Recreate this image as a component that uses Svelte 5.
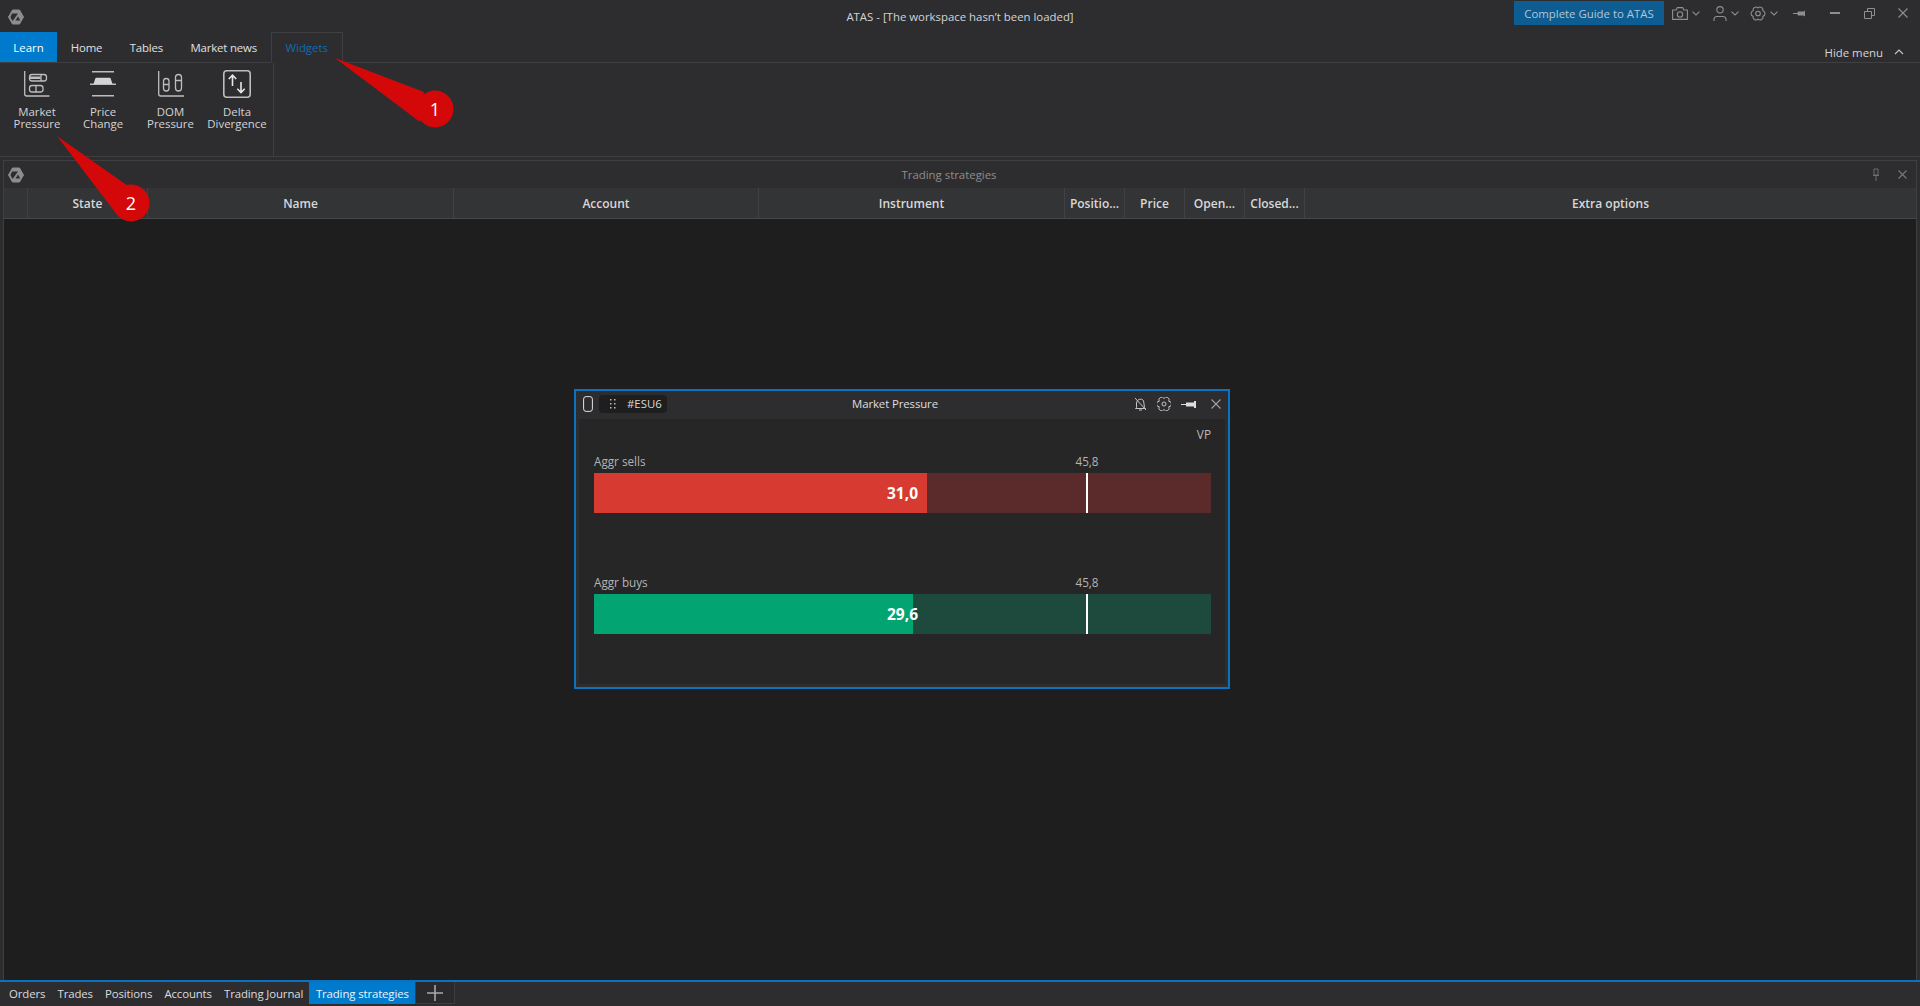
<script>
  const tabs = ['Home', 'Tables', 'Market news'];
  const columns = ['', 'State', 'Name', 'Account', 'Instrument', 'Positio...', 'Price', 'Open...', 'Closed...', 'Extra options'];
  const bottomTabs = ['Orders', 'Trades', 'Positions', 'Accounts', 'Trading Journal'];
  const meters = [
    { label: 'Aggr sells', value: '31,0', pct: 54, kind: 'sell' },
    { label: 'Aggr buys', value: '29,6', pct: 51.7, kind: 'buy' }
  ];
  const ribbon = [
    { id: 'mp', lines: ['Market', 'Pressure'] },
    { id: 'pc', lines: ['Price', 'Change'] },
    { id: 'dom', lines: ['DOM', 'Pressure'] },
    { id: 'dd', lines: ['Delta', 'Divergence'] }
  ];
</script>

{#snippet logo()}
  <svg class="logo" viewBox="0 0 16 16" width="16" height="16">
    <path d="M4.500 1h7L15.500 8l-4 7h-7L.5 8z" fill="#8d8d8d" stroke="#8d8d8d" stroke-linejoin="round"/>
    <path d="M4 4.500h6L5 11.500H4L2.500 8z" fill="#2d2d30"/>
    <path d="M10 7.500l2.300 4H7.500z" fill="#2d2d30"/>
  </svg>
{/snippet}

{#snippet chevron()}
  <svg class="chev" viewBox="0 0 8 5" width="8" height="5"><path d="M.5.7L4 4 7.500.7" fill="none" stroke="#8f8f8f" stroke-width="1.100"/></svg>
{/snippet}

<div class="app">
  <header class="titlebar">
    <div class="tb-left">{@render logo()}</div>
    <div class="tb-title">ATAS - [The workspace hasn’t been loaded]</div>
    <div class="tb-right">
      <button class="guide">Complete Guide to ATAS</button>
      <span class="ticon cam">
        <svg viewBox="0 0 16 13" width="16" height="13"><path d="M.6 3h3.600l1-2.400h5.600l1 2.400h3.600v9.400H.6z" fill="none" stroke="#8f8f8f" stroke-width="1.100" stroke-linejoin="round"/><circle cx="8" cy="7.500" r="2.700" fill="none" stroke="#8f8f8f" stroke-width="1.100"/></svg>
        {@render chevron()}
      </span>
      <span class="ticon user">
        <svg viewBox="0 0 14 15" width="14" height="15"><circle cx="7" cy="3.800" r="3.200" fill="none" stroke="#8f8f8f" stroke-width="1.100"/><path d="M1 15v-2a3 3 0 0 1 3-2.500h6a3 3 0 0 1 3 2.500v2" fill="none" stroke="#8f8f8f" stroke-width="1.100"/></svg>
        {@render chevron()}
      </span>
      <span class="ticon gear">
        <svg viewBox="0 0 16 15" width="16" height="15"><path d="M8 1.900A2.900 2.900 0 0 1 12.850 4.700 2.900 2.900 0 0 1 12.850 10.300 2.900 2.900 0 0 1 8 13.100 2.900 2.900 0 0 1 3.150 10.300 2.900 2.900 0 0 1 3.150 4.700 2.900 2.900 0 0 1 8 1.900z" fill="none" stroke="#8f8f8f" stroke-width="1.100"/><circle cx="8" cy="7.500" r="2.300" fill="none" stroke="#8f8f8f" stroke-width="1.100"/></svg>
        {@render chevron()}
      </span>
      <span class="ticon pin">
        <svg viewBox="0 0 13 7" width="13" height="7"><path d="M0 3.500h5M5 2h6v3H5zM11.500 .8v5.400" fill="#8f8f8f" stroke="#8f8f8f"/></svg>
      </span>
      <span class="ticon min"><svg viewBox="0 0 10 3" width="10" height="3"><rect width="10" height="2" fill="#8f8f8f"/></svg></span>
      <span class="ticon max"><svg viewBox="0 0 11 11" width="11" height="11"><path d="M3.500 3V.5h7v7H8M.5 3.500h7v7h-7z" fill="none" stroke="#8f8f8f"/></svg></span>
      <span class="ticon close"><svg viewBox="0 0 10 10" width="10" height="10"><path d="M.5.5l9 9M9.500.5l-9 9" stroke="#8f8f8f" stroke-width="1.100"/></svg></span>
    </div>
  </header>

  <nav class="tabs">
    <div class="tab learn">Learn</div>
    {#each tabs as t}<div class="tab">{t}</div>{/each}
    <div class="tab widgets">Widgets</div>
    <div class="hide">Hide menu
      <svg viewBox="0 0 10 6" width="10" height="6"><path d="M1 5l4-4 4 4" fill="none" stroke="#c8c8c8" stroke-width="1.100"/></svg>
    </div>
  </nav>

  <section class="ribbon">
    <div class="group">
      {#each ribbon as r}
        <div class="rb rb-{r.id}">
          <div class="ic">
            {#if r.id === 'mp'}
              <svg viewBox="0 0 26 26" width="26" height="26"><g fill="none" stroke="#bdbdbd" stroke-width="1.300"><path d="M.7 0v23a2 2 0 0 0 2 2H25.500"/><rect x="5.500" y="3.500" width="17" height="6.500" rx="2.500"/><rect x="5.500" y="14.500" width="13.500" height="6.500" rx="2.500"/><path d="M17 3.500v6.500M12 14.500v6.500"/></g><rect x="6" y="5.500" width="10.500" height="2.500" fill="#bdbdbd"/></svg>
            {:else if r.id === 'pc'}
              <svg viewBox="0 0 26 26" width="26" height="26"><path d="M2 .8h22M0 13.300h26M2 24.800h22" stroke="#bdbdbd" stroke-width="1.500"/><path d="M3.500 13l1.800-5.500a1 1 0 0 1 1-.8h13.400a1 1 0 0 1 1 .8l1.800 5.500z" fill="#d4d4d4"/></svg>
            {:else if r.id === 'dom'}
              <svg viewBox="0 0 26 26" width="26" height="26"><g fill="none" stroke="#bdbdbd" stroke-width="1.300"><path d="M.7 0v23a2 2 0 0 0 2 2H26"/><rect x="5.500" y="7.500" width="5.500" height="12.500" rx="2.700"/><rect x="17.500" y="3.500" width="6" height="16.500" rx="3"/><path d="M5.500 13.500h5.500M17.500 9.500h6"/></g></svg>
            {:else}
              <svg viewBox="0 0 28 28" width="28" height="28"><rect x=".8" y=".8" width="26.400" height="26.400" rx="3" fill="none" stroke="#bdbdbd" stroke-width="1.600"/><path d="M9.500 16V5M5.800 9l3.700-3.800L13.200 9M18 12v10.500M14.300 18.800l3.700 3.700 3.700-3.700" fill="none" stroke="#e6e6e6" stroke-width="1.600"/></svg>
            {/if}
          </div>
          <span>{r.lines[0]}<br/>{r.lines[1]}</span>
        </div>
      {/each}
    </div>
  </section>

  <main class="panel">
    <div class="panel-head">
      {@render logo()}
      <span class="panel-title">Trading strategies</span>
      <svg class="ppin" viewBox="0 0 8 13" width="8" height="13"><path d="M2 1h4v6H2zM1 7.500h6M4 8v5" fill="none" stroke="#6f6f6f"/></svg>
      <svg class="pclose" viewBox="0 0 9 9" width="9" height="9"><path d="M.5.5l8 8M8.500.5l-8 8" stroke="#777" stroke-width="1.100"/></svg>
    </div>
    <div class="thead">
      {#each columns as c}<div class="th">{c}</div>{/each}
    </div>
    <div class="tbody"></div>

    <article class="window">
      <div class="w-head">
        <svg class="phone" viewBox="0 0 10 16" width="10" height="16"><rect x=".6" y=".6" width="8.800" height="14.800" rx="2.500" fill="none" stroke="#e4e4e4"/></svg>
        <div class="sym">
          <svg viewBox="0 0 6 10" width="6" height="10"><g fill="#bbb"><rect width="1.500" height="1.500"/><rect x="4" width="1.500" height="1.500"/><rect y="4" width="1.500" height="1.500"/><rect x="4" y="4" width="1.500" height="1.500"/><rect y="8" width="1.500" height="1.500"/><rect x="4" y="8" width="1.500" height="1.500"/></g></svg>
          <span>#ESU6</span>
        </div>
        <span class="w-title">Market Pressure</span>
        <div class="w-icons">
          <svg viewBox="0 0 13 14" width="13" height="14"><path d="M2.500 10.500V6a4 4 0 0 1 7-2.500L10.500 10.500l1 1h-10zM5 13h3M1 1l11 12" fill="none" stroke="#c4c4c4" stroke-width="1"/></svg>
          <svg viewBox="0 0 14 14" width="14" height="14"><path d="M7 1.500A2.700 2.700 0 0 1 11.760 4.250 2.700 2.700 0 0 1 11.760 9.750 2.700 2.700 0 0 1 7 12.500 2.700 2.700 0 0 1 2.240 9.750 2.700 2.700 0 0 1 2.240 4.250 2.700 2.700 0 0 1 7 1.500z" fill="none" stroke="#c4c4c4"/><circle cx="7" cy="7" r="2" fill="none" stroke="#c4c4c4"/></svg>
          <svg viewBox="0 0 15 7" width="15" height="7"><path d="M0 3.500h6" stroke="#ddd"/><path d="M5 1.500h8v4H5z M13 0h2v7h-2z" fill="#ddd"/></svg>
          <svg class="x" viewBox="0 0 10 10" width="10" height="10"><path d="M.5.5l9 9M9.500.5l-9 9" stroke="#a0a0a0" stroke-width="1.100"/></svg>
        </div>
      </div>
      <div class="w-body">
        <div class="vp">VP</div>
        {#each meters as m}
          <div class="meter">
            <div class="labels"><span>{m.label}</span><span class="limit">45,8</span></div>
            <div class="bar {m.kind}">
              <div class="fill" style="width: {m.pct}%"></div>
              <b class="val">{m.value}</b>
              <i class="mark"></i>
            </div>
          </div>
        {/each}
      </div>
    </article>
  </main>

  <footer class="bottom">
    {#each bottomTabs as t}<div class="btab">{t}</div>{/each}
    <div class="btab active">Trading strategies</div>
    <div class="plus"><svg viewBox="0 0 16 16" width="16" height="16"><path d="M8 0v16M0 8h16" stroke="#a8a8a8" stroke-width="1.600"/></svg></div>
  </footer>

  <svg class="annot" viewBox="0 0 500 240" width="500" height="240">
    <path d="M335 58L424 92 L420 122z" fill="#d40808"/>
    <circle cx="435" cy="109" r="18.500" fill="#d40808"/>
    <text x="435" y="116" text-anchor="middle">1</text>
    <path d="M57 136L128 186 L115 212z" fill="#d40808"/>
    <circle cx="131" cy="203" r="18.500" fill="#d40808"/>
    <text x="131" y="210" text-anchor="middle">2</text>
  </svg>
</div>

<style>
  :global(body) { margin: 0; background: #2d2d30; }
  .app {
    position: relative;
    width: 1920px;
    height: 1006px;
    overflow: hidden;
    display: flex;
    flex-direction: column;
    background: #2d2d30;
    color: #e6e6e6;
    font: 11.4px/16px "Open Sans", "Noto Sans", sans-serif;
  }
  .titlebar { height: 32px; display: flex; align-items: flex-start; position: relative; flex: none; }
  .tb-left { padding: 9px 0 0 8px; }
  .logo { display: block; flex: none; }
  .tb-title { position: absolute; left: 0; top: 9px; width: 1920px; text-align: center; color: #d4d4d4; }
  .tb-right { margin-left: auto; display: flex; align-items: flex-start; position: relative; z-index: 1; }
  .guide {
    margin-top: 1px; width: 150px; height: 24px; padding: 1px 0 0; border: 0;
    background: #0e5d92; color: #b4c6d4; font: inherit;
  }
  .ticon { display: flex; align-items: center; gap: 4px; height: 26px; flex: none; }
  .cam { margin-left: 8px; width: 28px; }
  .user { margin-left: 13px; width: 26px; }
  .gear { margin-left: 11px; width: 28px; }
  .pin { margin-left: 15px; width: 13px; }
  .min { margin-left: 24px; width: 10px; }
  .max { margin-left: 24px; width: 11px; }
  .close { margin-left: 23px; width: 10px; margin-right: 12px; }

  .tabs { height: 30px; flex: none; display: flex; border-bottom: 1px solid #3f3f42; position: relative; }
  .tab { padding: 8px 13.700px 0; color: #e0e0e0; height: 30px; box-sizing: border-box; white-space: nowrap; letter-spacing: -.15px; }
  .learn { background: #007acc; color: #fff; width: 57px; text-align: center; padding: 8px 0 0; letter-spacing: 0; }
  .widgets {
    width: 72px; padding: 7px 0 0; text-align: center; color: #0e6cb0; letter-spacing: 0;
    border: 1px solid #3f3f42; border-bottom: 1px solid #2d2d30; height: 31px; background: #2d2d30;
  }
  .hide { margin-left: auto; padding: 13px 16px 0 0; color: #d6d6d6; display: flex; gap: 11px; align-items: flex-start; }
  .hide svg { margin-top: 4px; }

  .ribbon { height: 93px; flex: none; border-bottom: 1px solid #3f3f42; display: flex; }
  .group { width: 274px; box-sizing: border-box; border-right: 1px solid #3f3f42; display: flex; padding-top: 6px; }
  .rb { display: flex; flex-direction: column; align-items: center; flex: none; }
  .ic { height: 30px; display: flex; align-items: center; }
  .ic svg { display: block; }
  .rb span { color: #d4d4d4; text-align: center; margin-top: 7px; line-height: 12px; white-space: nowrap; }
  .rb-mp { width: 74px; }
  .rb-pc { width: 58px; }
  .rb-dom { width: 77px; }
  .rb-dd { width: 56px; }

  .panel {
    flex: 1; min-height: 0; position: relative; margin: 3px 0 0 3px;
    width: 1914px; display: flex; flex-direction: column;
    border: 1px solid #3f3f42; border-bottom: 0;
    box-sizing: border-box;
  }
  .panel-head { height: 27px; flex: none; display: flex; align-items: center; padding-left: 4px; position: relative; }
  .panel-title { position: absolute; left: 0; width: 1890px; text-align: center; color: #8e8e8e; }
  .ppin { margin-left: auto; margin-right: 18px; }
  .pclose { margin-right: 9px; }
  .thead {
    height: 31px; flex: none; box-sizing: border-box; background: #333436; border-bottom: 1px solid #45474a;
    display: grid; grid-template-columns: 24px 120px 306px 305px 306px 60px 60px 60px 60px 1fr;
  }
  .th {
    border-right: 1px solid #3f4144; text-align: center; font-weight: 600; font-size: 12px; color: #d8d8d8;
    padding-top: 8px; box-sizing: border-box; white-space: nowrap; overflow: hidden;
  }
  .th:last-child { border-right: 0; }
  .tbody { flex: 1; background: #1e1e1e; }

  .window {
    position: absolute; left: 570px; top: 228px; width: 656px; height: 300px;
    box-sizing: border-box; border: 2px solid #0a72c0; background: #2d2d30;
    display: flex; flex-direction: column;
  }
  .w-head { height: 28px; flex: none; box-sizing: border-box; padding: 0 0 2px 7px; display: flex; align-items: center; position: relative; }
  .phone { flex: none; }
  .sym {
    margin-left: 6px; background: #1e1e1e; border-radius: 4px; height: 18px; width: 68px;
    display: flex; align-items: center; gap: 11px; padding-left: 11px; box-sizing: border-box; color: #d8d8d8;
  }
  .w-title { position: absolute; left: 0; width: 638px; text-align: center; color: #dedede; letter-spacing: -.1px; }
  .w-icons { margin-left: auto; display: flex; align-items: center; margin-right: 7px; }
  .w-icons svg:nth-child(2) { margin-left: 10px; }
  .w-icons svg:nth-child(3) { margin-left: 10px; }
  .w-icons .x { margin-left: 15px; }
  .w-body {
    flex: 1; min-height: 0; margin: 0 3px 3px; background: #262626; padding: 0 14px 0 15px; position: relative;
  }
  .vp { text-align: right; color: #bcbcbc; height: 23px; padding-top: 7px; font-size: 11.800px; }
  .meter { margin-bottom: 57px; }
  .meter:last-child { margin-bottom: 0; }
  .labels { display: flex; position: relative; height: 16px; color: #b4b4b4; padding-top: 4px; margin-bottom: 4px; font-size: 11.700px; }
  .limit { position: absolute; left: 478px; width: 30px; text-align: center; }
  .bar { height: 40px; position: relative; }
  .sell { background: #5a2b2a; }
  .buy { background: #1e4a3e; }
  .fill { height: 100%; }
  .sell .fill { background: #d63a30; }
  .buy .fill { background: #02a572; }
  .val { position: absolute; right: 293px; top: 12px; color: #fff; font-size: 15.500px; font-weight: 700; }
  .mark { position: absolute; left: 492px; top: 0; bottom: 0; width: 2px; background: #fff; }

  .bottom {
    height: 26px; flex: none; border-top: 2px solid #0a72c0; box-sizing: border-box;
    display: flex; padding-left: 3px; align-items: flex-start;
  }
  .btab { height: 22px; padding: 4px 6.100px 0; box-sizing: border-box; color: #dcdcdc; white-space: nowrap; letter-spacing: -.12px; }
  .active { background: #007acc; color: #eaf4fb; width: 106px; text-align: center; padding: 4px 0 0; }
  .plus {
    width: 40px; height: 22px; box-sizing: border-box; border: 1px solid #3d3d40; border-top: 0;
    display: flex; align-items: center; justify-content: center; background: #2a2a2d;
  }

  .annot { position: absolute; left: 0; top: 0; pointer-events: none; }
  .annot text { font: 18px "Open Sans", sans-serif; fill: #fff; }
</style>
